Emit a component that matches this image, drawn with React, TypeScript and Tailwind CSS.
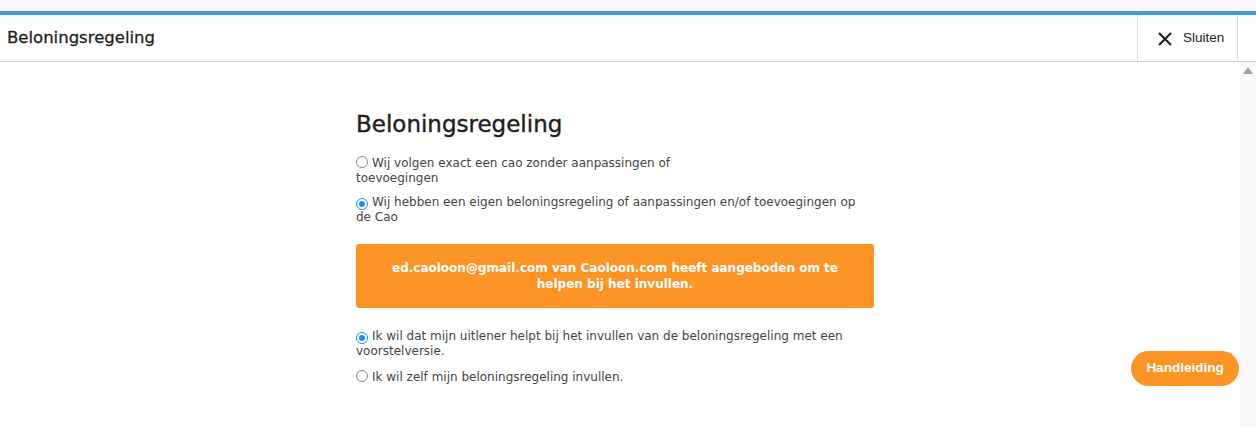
import React, { useState } from "react";

const font = "font-['DejaVu_Sans',sans-serif]";

function Radio({ checked, onClick, children }: { checked: boolean; onClick: () => void; children: React.ReactNode }) {
  return (
    <label onClick={onClick} className="block cursor-pointer text-[12px] leading-[15px] text-[#444]">
      <span
        className={`relative top-[1px] mr-[4px] inline-flex h-[12px] w-[12px] items-center justify-center rounded-full border bg-white align-baseline ${
          checked ? "border-[#1f8ff0]" : "border-[#8a8a8a]"
        }`}
      >
        {checked && <span className="h-[6px] w-[6px] rounded-full bg-[#1f8ff0]" />}
      </span>
      {children}
    </label>
  );
}

export default function App() {
  const [eigen, setEigen] = useState(true);
  const [hulp, setHulp] = useState(true);

  return (
    <div className={`flex h-[427px] w-[1256px] flex-col overflow-hidden bg-white ${font}`}>
      {/* top strip */}
      <div className="h-[11px] bg-[#f7f7fc]" />
      <div className="h-[4px] bg-[#3b9bdc]" />

      {/* header */}
      <div className="flex h-[47px] items-stretch border-b border-[#d0d0d0]">
        <div className="flex flex-1 items-center pl-[7px] text-[16.5px] text-[#1e1e1e] [-webkit-text-stroke:0.3px_#1e1e1e]">
          Beloningsregeling
        </div>
        <button className="flex w-[101px] items-center gap-[11px] border-x border-[#dcdcdc] pl-[20px] font-['Liberation_Sans',sans-serif] text-[13.5px] text-[#222]">
          <svg width="14" height="14" viewBox="0 0 14 14" className="relative top-[1px]">
            <path d="M1 1 L13 13 M13 1 L1 13" stroke="#222" strokeWidth="2.2" />
          </svg>
          Sluiten
        </button>
        <div className="w-[18px]" />
      </div>

      {/* body */}
      <div className="flex flex-1">
        <div className="relative flex-1">
          <div className="ml-[356px] w-[518px] pt-[48px]">
            <h1 className="text-[23px] leading-[28px] text-[#1e1e1e] [-webkit-text-stroke:0.4px_#1e1e1e]">Beloningsregeling</h1>

            <div className="mt-[17px] flex flex-col gap-[9px]">
              <Radio checked={!eigen} onClick={() => setEigen(false)}>
                Wij volgen exact een cao zonder aanpassingen of
                <br />
                toevoegingen
              </Radio>
              <Radio checked={eigen} onClick={() => setEigen(true)}>
                Wij hebben een eigen beloningsregeling of aanpassingen en/of toevoegingen op de Cao
              </Radio>
            </div>

            <div className="mt-[19px] flex h-[64px] items-center justify-center rounded-[3px] bg-[#fd9426] px-[24px] text-center text-[12px] font-bold leading-[16px] text-white">
              ed.caoloon@gmail.com van Caoloon.com heeft aangeboden om te helpen bij het invullen.
            </div>

            <div className="mt-[21px] flex flex-col gap-[10px]">
              <Radio checked={hulp} onClick={() => setHulp(true)}>
                Ik wil dat mijn uitlener helpt bij het invullen van de beloningsregeling met een voorstelversie.
              </Radio>
              <Radio checked={!hulp} onClick={() => setHulp(false)}>
                Ik wil zelf mijn beloningsregeling invullen.
              </Radio>
            </div>
          </div>

          <button className="absolute right-[1px] top-[289px] h-[35px] w-[108px] rounded-full bg-[#fd9426] font-['Liberation_Sans',sans-serif] text-[13.5px] font-bold text-white">
            Handleiding
          </button>
        </div>

        {/* scrollbar */}
        <div className="flex w-[16px] flex-col items-center bg-[#f8f8f8] pt-[5px]">
          <svg width="10" height="7" viewBox="0 0 10 7">
            <path d="M5 0 L10 7 L0 7 Z" fill="#a3a3a3" />
          </svg>
        </div>
      </div>
    </div>
  );
}
